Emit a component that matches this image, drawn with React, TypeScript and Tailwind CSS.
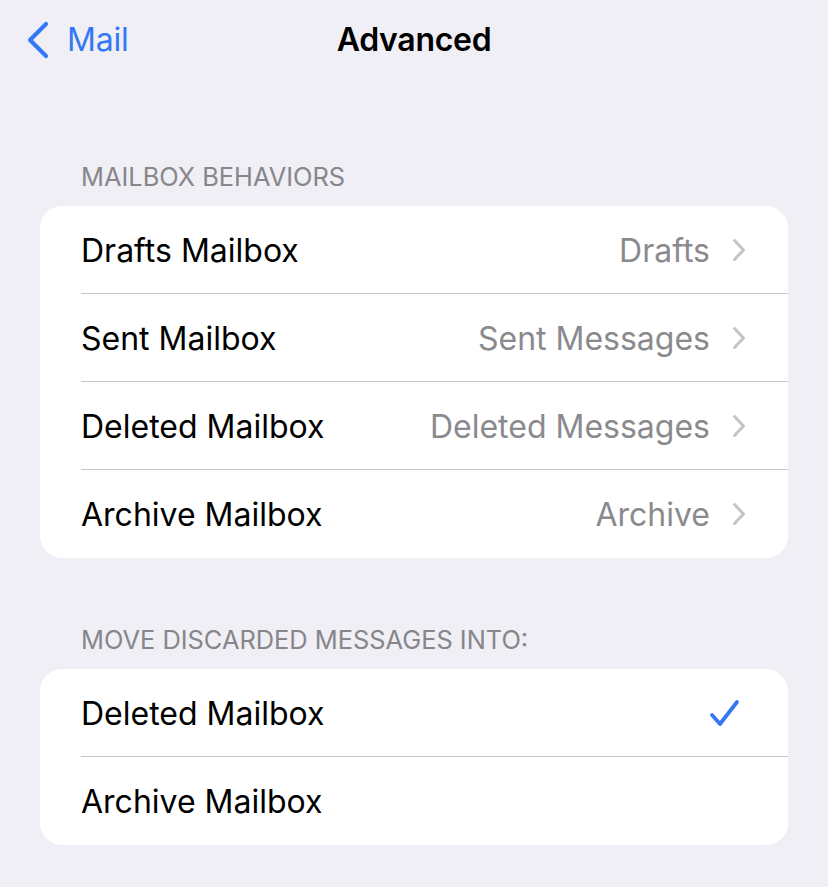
import React from "react";

const font = { fontFamily: "Inter, 'Noto Sans', sans-serif" };

function Chevron() {
  return (
    <svg width="14" height="24" viewBox="0 0 14 24" className="ml-[22px] shrink-0">
      <path d="M2.5 2.5 L11.5 12 L2.5 21.5" fill="none" stroke="#c4c4c7" strokeWidth="3" strokeLinecap="round" strokeLinejoin="round" />
    </svg>
  );
}

function Check() {
  return (
    <svg width="32" height="30" viewBox="0 0 32 30" className="shrink-0">
      <path d="M3 17 L11 26 L28 4" fill="none" stroke="#3478f6" strokeWidth="3.8" strokeLinecap="round" strokeLinejoin="round" />
    </svg>
  );
}

function Row({ label, value, last, check }: { label: string; value?: string; last?: boolean; check?: boolean }) {
  return (
    <div className="pl-[41px] h-[88px] flex">
      <div className={`flex-1 flex items-center pr-[42px] ${last ? "" : "border-b border-[#c6c6c8]"}`}>
        <span className="flex-1 text-[32px] text-black pt-[2px]">{label}</span>
        {value && <span className="text-[32px] text-[#8a8a8e] pt-[2px]">{value}</span>}
        {value && <Chevron />}
        {check && <span className="mr-[5px]"><Check /></span>}
      </div>
    </div>
  );
}

export default function App() {
  return (
    <div className="w-[828px] h-[887px] bg-[#f0eff5] overflow-hidden" style={font}>
      <div className="h-[80px] grid grid-cols-[1fr_auto_1fr] items-center">
        <div className="flex items-center pl-[26px]">
          <svg width="24" height="38" viewBox="0 0 24 38">
            <path d="M20 3 L4 19 L20 35" fill="none" stroke="#3478f6" strokeWidth="4.2" strokeLinecap="round" strokeLinejoin="round" />
          </svg>
          <span className="ml-[17px] text-[32px] text-[#3478f6] tracking-[-0.2px]">Mail</span>
        </div>
        <div className="text-[32px] font-semibold text-black tracking-[-0.3px]">Advanced</div>
        <div />
      </div>
      <div className="pt-[82px] px-[81px] text-[25.4px] text-[#86868b] leading-[30px]">MAILBOX BEHAVIORS</div>
      <div className="mx-[40px] mt-[14px] bg-white rounded-[22px] overflow-hidden">
        <Row label="Drafts Mailbox" value="Drafts" />
        <Row label="Sent Mailbox" value="Sent Messages" />
        <Row label="Deleted Mailbox" value="Deleted Messages" />
        <Row label="Archive Mailbox" value="Archive" last />
      </div>
      <div className="pt-[67px] px-[81px] text-[25.4px] text-[#86868b] leading-[30px]">MOVE DISCARDED MESSAGES INTO:</div>
      <div className="mx-[40px] mt-[14px] bg-white rounded-[22px] overflow-hidden">
        <Row label="Deleted Mailbox" check />
        <Row label="Archive Mailbox" last />
      </div>
    </div>
  );
}
